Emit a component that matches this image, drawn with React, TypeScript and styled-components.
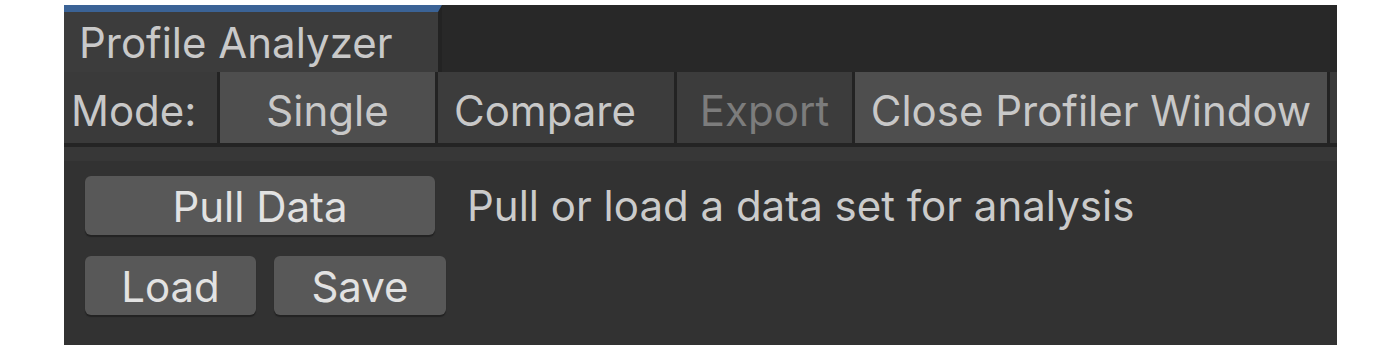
import React from "react";
import styled, { createGlobalStyle } from "styled-components";

const Global = createGlobalStyle`
  html, body { margin: 0; padding: 0; background: #ffffff; }
  body { font-family: Inter, "Noto Sans", "DejaVu Sans", sans-serif; }
`;

const Page = styled.div`
  padding: 5px 0 0 64px;
`;

const Window = styled.div`
  width: 1273px;
  display: flex;
  flex-direction: column;
  background: #323232;
`;

const TabStrip = styled.div`
  display: flex;
  height: 67px;
  background: #282828;
`;

const Tab = styled.div`
  width: 378px;
  box-sizing: border-box;
  border-top: 7px solid #3b6396;
  border-right: 4px solid #232323;
  background: #3c3c3c;
  color: #c9c9c9;
  font-size: 42px;
  display: flex;
  align-items: center;
  padding-left: 15px;
`;

const Toolbar = styled.div`
  display: flex;
  height: 75px;
  box-sizing: border-box;
  background: #3a3a3a;
  border-bottom: 4px solid #242424;
`;

const ModeLabel = styled.div`
  width: 153px;
  box-sizing: border-box;
  padding: 6px 0 0 7px;
  display: flex;
  align-items: center;
  color: #c8c8c8;
  font-size: 42px;
`;

const ToolButton = styled.div<{ $w: number; $active?: boolean; $disabled?: boolean; $pl?: number }>`
  width: ${(p) => p.$w}px;
  box-sizing: border-box;
  border-left: 3px solid #232323;
  background: ${(p) => (p.$active ? "#4e4e4e" : "#3c3c3c")};
  color: ${(p) => (p.$disabled ? "#7c7c7c" : "#c8c8c8")};
  font-size: 42px;
  display: flex;
  align-items: center;
  padding-top: 6px;
  justify-content: ${(p) => (p.$pl !== undefined ? "flex-start" : "center")};
  padding-left: ${(p) => (p.$pl !== undefined ? `${p.$pl}px` : "0")};
  white-space: nowrap;
`;

const ToolFill = styled.div`
  flex: 1;
  border-left: 3px solid #232323;
`;

const Content = styled.div`
  height: 198px;
  box-sizing: border-box;
  border-top: 14px solid #373737;
  padding: 15px 0 0 21px;
  display: flex;
  flex-direction: column;
  gap: 21px;
`;

const Row = styled.div`
  display: flex;
  align-items: center;
  gap: 18px;
`;

const Button = styled.div<{ $w: number }>`
  width: ${(p) => p.$w}px;
  height: 59px;
  box-sizing: border-box;
  background: #585858;
  border-radius: 6px;
  box-shadow: 0 2px 1px #232323;
  color: #e2e2e2;
  font-size: 42px;
  display: flex;
  align-items: center;
  justify-content: center;
  padding-top: 2px;
`;

const Hint = styled.div`
  margin-left: 14px;
  color: #cbcbcb;
  font-size: 42px;
`;

export default function App() {
  return (
    <>
      <Global />
      <Page>
        <Window>
          <TabStrip>
            <Tab>Profile Analyzer</Tab>
          </TabStrip>
          <Toolbar>
            <ModeLabel>Mode:</ModeLabel>
            <ToolButton $w={218} $active>Single</ToolButton>
            <ToolButton $w={239} $pl={16}>Compare</ToolButton>
            <ToolButton $w={178} $disabled>Export</ToolButton>
            <ToolButton $w={475} $active>Close Profiler Window</ToolButton>
            <ToolFill />
          </Toolbar>
          <Content>
            <Row>
              <Button $w={350}>Pull Data</Button>
              <Hint>Pull or load a data set for analysis</Hint>
            </Row>
            <Row>
              <Button $w={171}>Load</Button>
              <Button $w={172}>Save</Button>
            </Row>
          </Content>
        </Window>
      </Page>
    </>
  );
}
